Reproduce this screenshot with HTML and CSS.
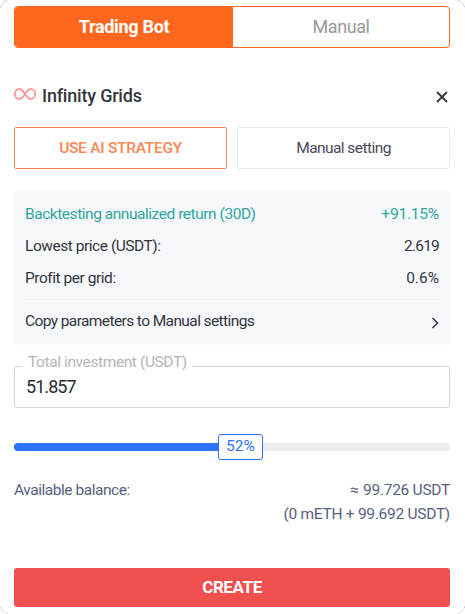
FILE: index.html
```html
<!DOCTYPE html>
<html lang="en">
<head>
    <meta charset="UTF-8">
    <title>Trading Bot</title>
    <link rel="stylesheet" href="styles.css">
</head>
<body>
    <div class="card">
        <svg class="corners" width="465" height="614" viewBox="0 0 465 614">
            <path d="M0 8Q2 2 8 0M457 0Q463 2 465 8M465 606Q463 612 457 614M8 614Q2 612 0 606"/>
        </svg>
        <div class="tabs">
            <div class="tab active">Trading Bot</div>
            <div class="tab">Manual</div>
        </div>

        <div class="title">
            <svg class="infinity" width="22" height="12" viewBox="0 0 22 12">
                <path d="M11 6C8.800 2.800 7.800 1 5.500 1a4.700 5 0 0 0 0 10C7.800 11 8.800 9.200 11 6s3.200-5 5.500-5a4.700 5 0 0 1 0 10C14.200 11 13.200 9.200 11 6z"/>
            </svg>
            <span>Infinity Grids</span>
            <svg class="close" width="12" height="12" viewBox="0 0 12 12">
                <path d="M1 1l10 10M11 1L1 11"/>
            </svg>
        </div>

        <div class="modes">
            <div class="mode selected">USE AI STRATEGY</div>
            <div class="mode">Manual setting</div>
        </div>

        <div class="params">
            <div class="row green">
                <span>Backtesting annualized return (30D)</span>
                <span class="return">+91.15%</span>
            </div>
            <div class="row">
                <span>Lowest price (USDT):</span>
                <span class="price">2.619</span>
            </div>
            <div class="row">
                <span>Profit per grid:</span>
                <span class="profit">0.6%</span>
            </div>
            <div class="copy">
                <span>Copy parameters to Manual settings</span>
                <svg class="arrow" width="8" height="12" viewBox="0 0 8 12">
                    <path d="M1.500 1l5 5-5 5"/>
                </svg>
            </div>
        </div>

        <div class="field">
            <span class="label">Total investment (USDT)</span>
            <span class="value">51.857</span>
        </div>

        <div class="slider">
            <div class="fill" style="width: 52%"></div>
            <div class="thumb" style="left: 51.8%">52%</div>
        </div>

        <div class="balance">
            <span>Available balance:</span>
            <div class="amounts">
                <div><span class="approx">≈</span> 99.726 USDT</div>
                <div>(0 mETH + 99.692 USDT)</div>
            </div>
        </div>

        <div class="create">CREATE</div>
    </div>
</body>
</html>
```

FILE: styles.css
```css
* {
    box-sizing: border-box;
}
body {
    margin: 0;
    background: #fff;
    font-family: Roboto, "Liberation Sans", sans-serif;
    font-size: 15.500px;
    letter-spacing: -0.460px;
    color: #35353f;
}
.card {
    position: relative;
    width: 465px;
    height: 614px;
    padding: 6px 15px 0 14px;
    white-space: nowrap;
}
.corners {
    position: absolute;
    top: 0;
    left: 0;
    fill: none;
    stroke: #c4c4d0;
    stroke-dasharray: 2 1;
}
.tabs {
    display: flex;
    height: 42px;
    border: 1px solid #ff671f;
    border-radius: 4px;
    overflow: hidden;
}
.tab {
    flex: 1;
    display: flex;
    align-items: center;
    justify-content: center;
    padding-bottom: 1px;
    font-size: 18px;
    color: #999;
}
.tab.active {
    flex: 0 0 218px;
    background: #ff671f;
    color: #fff;
    font-weight: bold;
    letter-spacing: -0.300px;
}
.title {
    display: flex;
    align-items: center;
    height: 24px;
    margin-top: 36px;
    padding-bottom: 1px;
    font-size: 18px;
    font-weight: 500;
    letter-spacing: -0.200px;
}
.infinity {
    margin: -3px 6px 0 0;
    fill: none;
    stroke: #f99;
    stroke-width: 1.800;
}
.close {
    margin: 3px 2px 0 auto;
    fill: none;
    stroke: #35353f;
    stroke-width: 1.800;
}
.modes {
    display: flex;
    gap: 10px;
    margin-top: 19px;
}
.mode {
    flex: 1;
    display: flex;
    align-items: center;
    justify-content: center;
    height: 42px;
    border: 1px solid #ebebeb;
    border-radius: 2px;
    letter-spacing: -0.560px;
    color: #4a4a5a;
}
.mode.selected {
    border-color: #ff8550;
    color: #ff8550;
    font-weight: 500;
    letter-spacing: -0.270px;
}
.params {
    height: 155px;
    margin-top: 21px;
    padding: 8px 11px 0;
    background: #f7f8fb;
    border-radius: 3px;
}
.row {
    display: flex;
    align-items: center;
    justify-content: space-between;
    height: 32px;
}
.row.green {
    color: #2fa5a0;
}
.return {
    letter-spacing: -0.200px;
}
.price {
    letter-spacing: -0.800px;
}
.profit {
    letter-spacing: 0;
}
.copy {
    display: flex;
    align-items: center;
    justify-content: space-between;
    height: 43px;
    margin-top: 5px;
    border-top: 1px solid #eceef1;
    letter-spacing: -0.600px;
}
.arrow {
    margin-top: 4px;
    fill: none;
    stroke: #35353f;
    stroke-width: 1.500;
}
.field {
    position: relative;
    display: flex;
    align-items: center;
    height: 42px;
    margin-top: 21px;
    padding: 0 0 2px 11px;
    border: 1px solid #d6d6d6;
    border-radius: 3px;
    font-size: 18px;
    letter-spacing: -0.950px;
    color: #2b2b33;
}
.label {
    position: absolute;
    top: -16px;
    left: 7px;
    padding: 0 5px 0 6px;
    background: #fff;
    line-height: 22px;
    font-size: 15.500px;
    letter-spacing: -0.400px;
    color: #b5b5b5;
}
.slider {
    position: relative;
    height: 8px;
    margin-top: 35px;
    border-radius: 4px;
    background: #ececec;
}
.fill {
    height: 8px;
    border-radius: 4px;
    background: #2b73ff;
}
.thumb {
    position: absolute;
    top: -9px;
    width: 45px;
    height: 26px;
    margin-left: -22px;
    border: 1px solid #2b73ff;
    border-radius: 3px;
    background: #fff;
    line-height: 23px;
    letter-spacing: 0;
    text-align: center;
    color: #2b73ff;
}
.balance {
    display: flex;
    justify-content: space-between;
    margin-top: 27px;
    line-height: 24px;
    color: #5a6080;
}
.amounts {
    text-align: right;
    letter-spacing: -0.270px;
}
.approx {
    margin-right: 1px;
}
.create {
    display: flex;
    align-items: center;
    justify-content: center;
    height: 39px;
    margin-top: 42px;
    padding-bottom: 1px;
    border-radius: 3px;
    background: #f0504e;
    font-size: 17px;
    font-weight: bold;
    letter-spacing: -0.400px;
    color: #fff;
}
```
